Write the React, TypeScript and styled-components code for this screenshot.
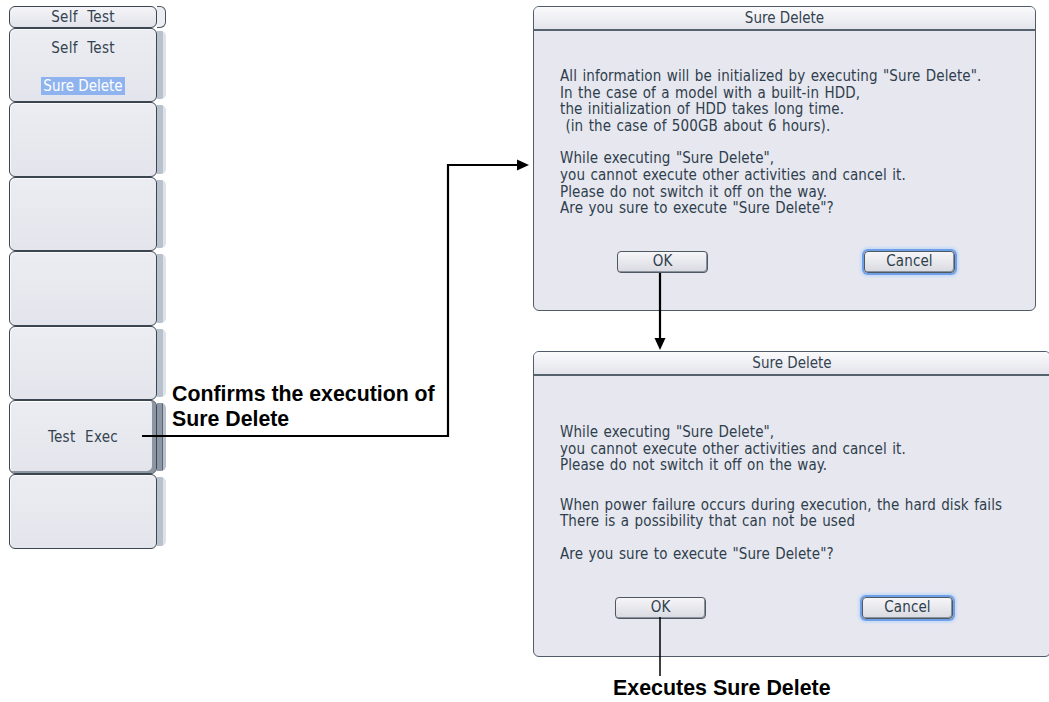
import { createGlobalStyle, styled } from 'styled-components'

const GlobalStyle = createGlobalStyle`
  html, body {
    margin: 0;
    padding: 0;
    background: #fff;
  }
`

const LCD_FONT = `"DejaVu Sans", sans-serif`

const dialog1 = [
  {
    gap: 0,
    lines: [
      'All information will be initialized by executing "Sure Delete".',
      'In the case of a model with a built-in HDD,',
      'the initialization of HDD takes long time.',
      '\u00a0(in the case of 500GB about 6 hours).',
    ],
  },
  {
    gap: 16,
    lines: [
      'While executing "Sure Delete",',
      'you cannot execute other activities and cancel it.',
      'Please do not switch it off on the way.',
      'Are you sure to execute "Sure Delete"?',
    ],
  },
]

const dialog2 = [
  {
    gap: 0,
    lines: [
      'While executing "Sure Delete",',
      'you cannot execute other activities and cancel it.',
      'Please do not switch it off on the way.',
    ],
  },
  {
    gap: 23,
    lines: [
      'When power failure occurs during execution, the hard disk fails',
      'There is a possibility that can not be used',
    ],
  },
  {
    gap: 16,
    lines: ['Are you sure to execute "Sure Delete"?'],
  },
]

const keys = [
  { label: 'Self Test', sub: 'Sure Delete' },
  { label: '' },
  { label: '' },
  { label: '' },
  { label: '' },
  { label: 'Test Exec', pressed: true },
  { label: '' },
]

export default function App() {
  return (
    <>
      <GlobalStyle />
      <Canvas>
        <SoftKeyMenu>
          <KeyRow $height={22}>
            <MenuTab>Self Test</MenuTab>
            <TabStrip />
          </KeyRow>
          {keys.map((k, i) => (
            <KeyRow key={i} $height={74.4}>
              <SoftKey $pressed={!!k.pressed}>
                {k.sub ? (
                  <>
                    <KeyLabel>{k.label}</KeyLabel>
                    <Highlight>{k.sub}</Highlight>
                  </>
                ) : (
                  k.label && <KeyLabel $center>{k.label}</KeyLabel>
                )}
              </SoftKey>
              <KeyStrip $pressed={!!k.pressed} />
            </KeyRow>
          ))}
        </SoftKeyMenu>

        <NoteColumn>
          <Note>
            Confirms the execution of
            <br />
            Sure Delete
          </Note>
        </NoteColumn>

        <DialogColumn>
          <Dialog $width={503} $height={305}>
            <DialogTitle>Sure Delete</DialogTitle>
            <DialogBody $top={37}>
              {dialog1.map((p, i) => (
                <Para key={i} $gap={p.gap}>
                  {p.lines.map((l, j) => (
                    <div key={j}>{l}</div>
                  ))}
                </Para>
              ))}
              <ButtonRow $top={34}>
                <DialogButton>OK</DialogButton>
                <DialogButton $focused>Cancel</DialogButton>
              </ButtonRow>
            </DialogBody>
          </Dialog>

          <Dialog $width={518} $height={306} $top={40}>
            <DialogTitle>Sure Delete</DialogTitle>
            <DialogBody $top={48}>
              {dialog2.map((p, i) => (
                <Para key={i} $gap={p.gap}>
                  {p.lines.map((l, j) => (
                    <div key={j}>{l}</div>
                  ))}
                </Para>
              ))}
              <ButtonRow $top={34} $shift={-2}>
                <DialogButton>OK</DialogButton>
                <DialogButton $focused>Cancel</DialogButton>
              </ButtonRow>
            </DialogBody>
          </Dialog>

          <Caption>Executes Sure Delete</Caption>
        </DialogColumn>

        {/* connector lines and arrow heads drawn over the page */}
        <Connectors width="1049" height="702" viewBox="0 0 1049 702">
          <path d="M142 436 H448 V165 H519" fill="none" stroke="#000" strokeWidth="2.2" />
          <polygon points="529,165 517,159.5 517,170.5" fill="#000" />
          <path d="M660 273 V340" fill="none" stroke="#000" strokeWidth="2.2" />
          <polygon points="660,350 654.5,338 665.5,338" fill="#000" />
          <path d="M660 617 V676" fill="none" stroke="#000" strokeWidth="1.5" />
        </Connectors>
      </Canvas>
    </>
  )
}

// Styled component
const Canvas = styled.div`
  position: relative;
  width: 1049px;
  height: 702px;
  overflow: hidden;
  display: flex;
  align-items: flex-start;
  background: #fff;
`

const SoftKeyMenu = styled.div`
  flex: none;
  margin: 6px 0 0 9px;
  width: 157px;
  display: flex;
  flex-direction: column;
`

const KeyRow = styled.div<{ $height: number }>`
  height: ${(p) => p.$height}px;
  display: grid;
  grid-template-columns: 148px 9px;
`

const lcd = `
  font-family: ${LCD_FONT};
  font-stretch: condensed;
  color: #34434f;
`

const MenuTab = styled.div`
  ${lcd}
  box-sizing: border-box;
  border: 1px solid #3c4651;
  border-radius: 6px;
  background: linear-gradient(#f4f4f8, #e2e3ea);
  font-size: 15px;
  word-spacing: 5px;
  letter-spacing: 0.3px;
  display: flex;
  align-items: center;
  justify-content: center;
`

const TabStrip = styled.div`
  box-sizing: border-box;
  border: 1px solid #4a545e;
  border-left: none;
  border-radius: 0 6px 6px 0;
  background: #eceef3;
`

const SoftKey = styled.div<{ $pressed: boolean }>`
  box-sizing: border-box;
  border: 1px solid #3c4651;
  border-radius: 6px;
  background: linear-gradient(#ecedf2, #e4e5ec);
  display: flex;
  flex-direction: column;
  align-items: center;
  box-shadow: ${(p) =>
    p.$pressed ? 'inset -4px -2px 0 #8c96a2, inset 1px 1px 0 #fff' : 'inset 1px 1px 0 #f8f8fb'};
`

const KeyStrip = styled.div<{ $pressed: boolean }>`
  margin: 3px 0;
  border-radius: 0 5px 5px 0;
  background: ${(p) =>
    p.$pressed
      ? 'linear-gradient(90deg, #8c96a4 0 55%, #5b6571 55% 68%, #b9c0cb 68%)'
      : 'linear-gradient(90deg, #b9c1cd 0 70%, #dde1e8 70%)'};
`

const KeyLabel = styled.div<{ $center?: boolean }>`
  ${lcd}
  font-size: 15px;
  word-spacing: 5px;
  letter-spacing: 0.3px;
  margin-top: ${(p) => (p.$center ? '27px' : '10px')};
`

const Highlight = styled.span`
  ${lcd}
  margin-top: 20px;
  padding: 0 2px;
  background: #8fb3ef;
  color: #fff;
  font-size: 15px;
  line-height: 18px;
`

const NoteColumn = styled.div`
  flex: none;
  width: 367px;
  padding: 382px 0 0 6px;
  box-sizing: border-box;
`

const Note = styled.div`
  font-family: 'Liberation Sans', Arial, sans-serif;
  font-weight: 700;
  font-size: 21.3px;
  line-height: 25px;
  color: #000;
`

const DialogColumn = styled.div`
  flex: none;
  display: flex;
  flex-direction: column;
  padding-top: 6px;
`

const Dialog = styled.div<{ $width: number; $height: number; $top?: number }>`
  box-sizing: border-box;
  width: ${(p) => p.$width}px;
  height: ${(p) => p.$height}px;
  margin-top: ${(p) => p.$top ?? 0}px;
  border: 1px solid #505c68;
  border-radius: 6px;
  background: #e6e7ef;
  display: flex;
  flex-direction: column;
  overflow: hidden;
`

const DialogTitle = styled.div`
  ${lcd}
  height: 22px;
  flex: none;
  border-bottom: 2px solid #56626d;
  background: linear-gradient(#fafafc, #e4e5ec);
  font-size: 15px;
  display: flex;
  align-items: center;
  justify-content: center;
`

const DialogBody = styled.div<{ $top: number }>`
  ${lcd}
  padding: ${(p) => p.$top}px 0 0 26px;
  color: #2f3e4c;
  font-size: 15px;
  letter-spacing: 0.1px;
  word-spacing: 1px;
  line-height: 16.6px;
`

const Para = styled.div<{ $gap: number }>`
  margin-top: ${(p) => p.$gap}px;
  white-space: pre;
`

const ButtonRow = styled.div<{ $top: number; $shift?: number }>`
  margin-top: ${(p) => p.$top}px;
  margin-left: ${(p) => 57 + (p.$shift ?? 0)}px;
  display: flex;
  gap: 156px;
`

const DialogButton = styled.div<{ $focused?: boolean }>`
  ${lcd}
  box-sizing: border-box;
  width: 91px;
  height: 22px;
  border: 1px solid #4e5862;
  border-radius: 4px;
  background: linear-gradient(#f6f6f9, #d9dae1);
  box-shadow: ${(p) =>
    p.$focused
      ? 'inset -1px -1px 0 #8a929c, 0 0 0 2px #6f9fe6, 0 0 2px 4px #c9dcf6'
      : 'inset -1px -1px 0 #8a929c'};
  color: #2f3e4c;
  font-size: 15px;
  display: flex;
  align-items: center;
  justify-content: center;
`

const Caption = styled.div`
  margin: 19px 0 0 80px;
  font-family: 'Liberation Sans', Arial, sans-serif;
  font-weight: 700;
  font-size: 21.4px;
  line-height: 24px;
  color: #000;
`

const Connectors = styled.svg`
  position: absolute;
  left: 0;
  top: 0;
  pointer-events: none;
`
